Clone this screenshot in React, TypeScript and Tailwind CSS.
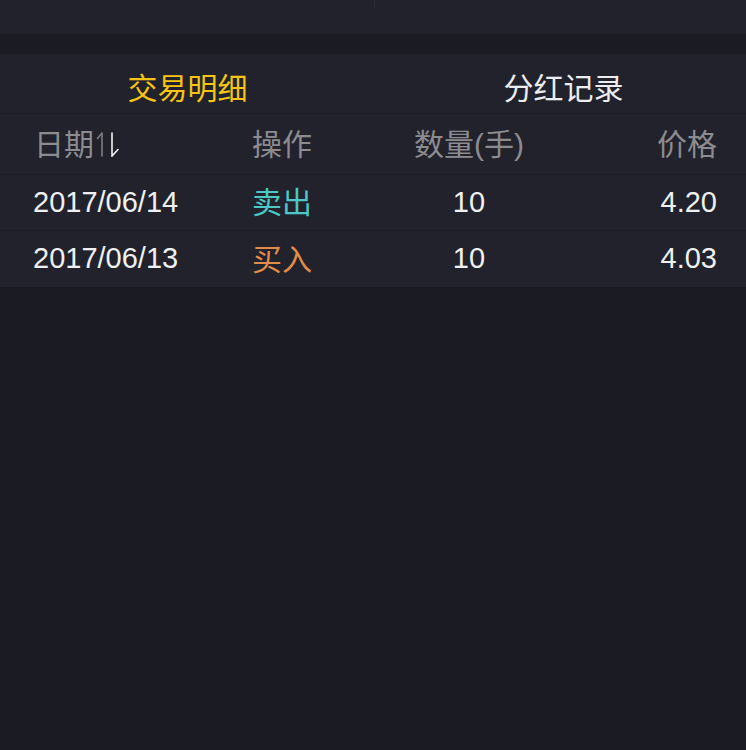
const FONT = '"Liberation Sans", "Noto Sans CJK SC", sans-serif';

const rows = [
  { date: '2017/06/14', action: '卖出', color: 'text-[#4cc7c5]', qty: '10', price: '4.20' },
  { date: '2017/06/13', action: '买入', color: 'text-[#e28c4b]', qty: '10', price: '4.03' },
];

function SortIcon() {
  return (
    <svg width="24" height="25" viewBox="0 0 24 25" fill="none" className="ml-[2px]">
      <path d="M6 1V24M6 1L1.5 6.5" stroke="#7d7d82" strokeWidth="1.6" strokeLinecap="round" />
      <path d="M16 1V24L22 17.5" stroke="#f2f2f4" strokeWidth="1.6" strokeLinecap="round" />
    </svg>
  );
}

export default function App() {
  return (
    <div className="w-[746px] h-[750px] bg-[#1b1c23]" style={{ fontFamily: FONT }}>
      <div className="h-[34px] bg-[#21222b] flex">
        <div className="w-[375px] h-[8px] border-r border-[#2b2c35]" />
      </div>
      <div className="h-[20px]" />
      <div className="h-[60px] bg-[#21222b] border-b border-[#1b1c23] flex text-[30px]">
        <div className="w-[375px] flex items-center justify-center pt-[10px] text-[#f5c416]">交易明细</div>
        <div className="flex-1 flex items-center justify-center pt-[10px] pl-[6px] text-[#ededef]">分红记录</div>
      </div>
      <div className="h-[61px] bg-[#21222b] border-b border-[#1b1c23] flex items-center pl-[34px] pr-[29px] text-[30px] text-[#8c8c90]">
        <div className="w-[218px] flex items-center">
          日期
          <SortIcon />
        </div>
        <div className="w-[150px]">操作</div>
        <div className="w-[134px] text-center">数量(手)</div>
        <div className="flex-1 text-right">价格</div>
      </div>
      {rows.map((r, i) => (
        <div
          key={r.date}
          className={`h-[56px] bg-[#21222b] flex items-center pl-[33px] pr-[29px] text-[#f0f0f2] ${i === 0 ? 'border-b border-[#1b1c23]' : ''}`}
        >
          <div className="w-[219px] text-[29px]">{r.date}</div>
          <div className={`w-[150px] text-[30px] ${r.color}`}>{r.action}</div>
          <div className="w-[134px] text-center text-[29px]">{r.qty}</div>
          <div className="flex-1 text-right text-[29px]">{r.price}</div>
        </div>
      ))}
    </div>
  );
}
